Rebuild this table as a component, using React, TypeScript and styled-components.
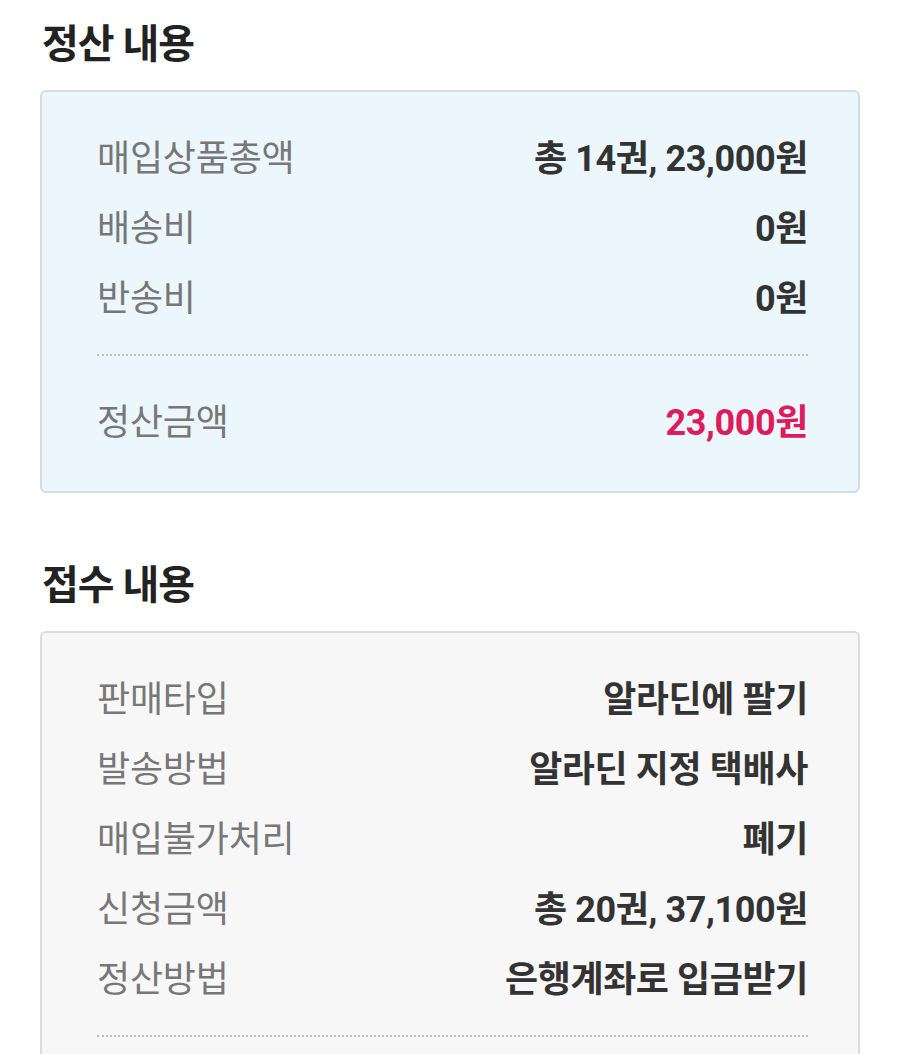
import React from 'react'
import styled, { createGlobalStyle } from 'styled-components'

const GlobalStyle = createGlobalStyle`
  html, body {
    margin: 0;
    padding: 0;
    background: #ffffff;
  }
  body {
    font-family: Roboto, "Noto Sans CJK KR", "Noto Sans", sans-serif;
    -webkit-font-smoothing: antialiased;
  }
`

const Page = styled.div`
  padding: 0 44px 0 40px;
`

const Section = styled.section`
  margin-bottom: 48px;
`

const SectionTitle = styled.h2`
  margin: 0;
  padding: 20px 0 0 2px;
  height: 90px;
  box-sizing: border-box;
  font-size: 40px;
  line-height: 50px;
  font-weight: 700;
  color: #222;
  letter-spacing: -1px;
`

const Box = styled.div<{ tone: 'blue' | 'gray' }>`
  border: 2px solid ${p => (p.tone === 'blue' ? '#d3dde2' : '#dcdcdc')};
  border-radius: 6px;
  background: ${p => (p.tone === 'blue' ? '#ebf7fd' : '#f7f7f7')};
  padding: 28px 50px 37px 55px;
`

const Row = styled.div`
  display: flex;
  justify-content: space-between;
  align-items: center;
  height: 70px;
`

const Label = styled.span`
  font-size: 36px;
  color: #777;
  font-weight: 400;
  letter-spacing: -0.2px;
`

const Value = styled.span<{ accent?: boolean }>`
  font-size: 36px;
  font-weight: 700;
  color: ${p => (p.accent ? '#e01b5b' : '#333')};
  letter-spacing: -0.4px;
`

const Divider = styled.div`
  border-top: 2px dotted #b8bec2;
  margin: 24px 0 28px;
`

type Item = { label: string; value: string }

const settlement: Item[] = [
  { label: '매입상품총액', value: '총 14권, 23,000원' },
  { label: '배송비', value: '0원' },
  { label: '반송비', value: '0원' },
]

const receipt: Item[] = [
  { label: '판매타입', value: '알라딘에 팔기' },
  { label: '발송방법', value: '알라딘 지정 택배사' },
  { label: '매입불가처리', value: '폐기' },
  { label: '신청금액', value: '총 20권, 37,100원' },
  { label: '정산방법', value: '은행계좌로 입금받기' },
]

const Rows = ({ items }: { items: Item[] }) => (
  <>
    {items.map(item => (
      <Row key={item.label}>
        <Label>{item.label}</Label>
        <Value>{item.value}</Value>
      </Row>
    ))}
  </>
)

export default function App() {
  return (
    <Page>
      <GlobalStyle />
      <Section>
        <SectionTitle>정산 내용</SectionTitle>
        <Box tone="blue">
          <Rows items={settlement} />
          <Divider />
          <Row>
            <Label>정산금액</Label>
            <Value accent>23,000원</Value>
          </Row>
        </Box>
      </Section>
      <Section>
        <SectionTitle>접수 내용</SectionTitle>
        <Box tone="gray">
          <Rows items={receipt} />
          <Divider />
        </Box>
      </Section>
    </Page>
  )
}
